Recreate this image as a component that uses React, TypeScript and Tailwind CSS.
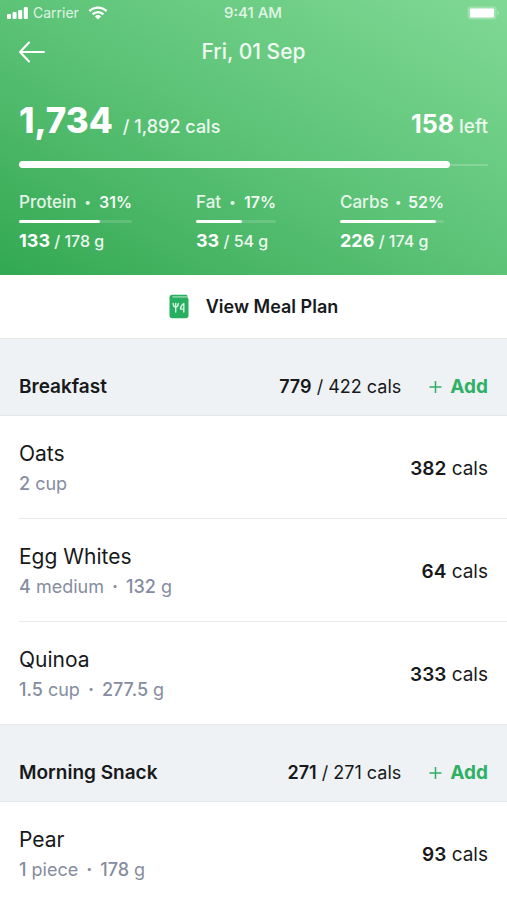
interface Food {
  name: string;
  amount: string;
  unit: string;
  grams?: string;
  cals: number;
}

interface Meal {
  title: string;
  eaten: number;
  goal: number;
  foods: Food[];
}

const macros = [
  { name: "Protein", share: 31, eaten: 133, goal: 178, progress: 72, width: "w-[113px]" },
  { name: "Fat", share: 17, eaten: 33, goal: 54, progress: 58, width: "w-20" },
  { name: "Carbs", share: 52, eaten: 226, goal: 174, progress: 92, width: "w-[104px]" },
];

const meals: Meal[] = [
  {
    title: "Breakfast",
    eaten: 779,
    goal: 422,
    foods: [
      { name: "Oats", amount: "2", unit: "cup", cals: 382 },
      { name: "Egg Whites", amount: "4", unit: "medium", grams: "132", cals: 64 },
      { name: "Quinoa", amount: "1.5", unit: "cup", grams: "277.5", cals: 333 },
    ],
  },
  {
    title: "Morning Snack",
    eaten: 271,
    goal: 271,
    foods: [{ name: "Pear", amount: "1", unit: "piece", grams: "178", cals: 93 }],
  },
];

function StatusBar() {
  return (
    <div className="grid h-[26px] grid-cols-3 items-center pl-[7px] pr-2 text-sm text-white/80">
      <div className="flex items-center gap-[5px]">
        <svg width="21" height="12" viewBox="0 0 21 12" className="fill-white" aria-hidden="true">
          <rect x="0" y="7" width="4" height="5" rx="1" />
          <rect x="5.6" y="5" width="4" height="7" rx="1" />
          <rect x="11.2" y="3" width="4" height="9" rx="1" />
          <rect x="16.8" y="0" width="4" height="12" rx="1" />
        </svg>
        <span>Carrier</span>
        <svg
          width="20"
          height="14"
          viewBox="0 0 20 14"
          fill="none"
          stroke="white"
          strokeWidth="2.4"
          className="ml-1"
          aria-hidden="true"
        >
          <path d="M1.4 5.2a12.2 12.2 0 0 1 17.2 0" />
          <path d="M4.6 8.4a7.6 7.6 0 0 1 10.8 0" />
          <path d="M10 13.4 6.9 10.4a4.4 4.4 0 0 1 6.2 0z" fill="white" stroke="none" />
        </svg>
      </div>
      <span className="text-center text-[15px] font-medium">9:41 AM</span>
      <svg width="33" height="16" viewBox="0 0 33 16" className="justify-self-end" aria-hidden="true">
        <rect x="1.5" y="1.5" width="29" height="13" rx="3" fill="white" fillOpacity="0.25" />
        <rect x="4" y="3.5" width="24" height="9" rx="1" fill="white" />
        <path d="M31.5 5.5c2 1 2 4 0 5z" fill="white" fillOpacity="0.3" />
      </svg>
    </div>
  );
}

function Summary() {
  return (
    <header className="bg-linear-to-tr from-[#32a852] via-[#5cc377] to-[#80d995] pb-[22px] text-white">
      <StatusBar />
      <div className="grid h-[52px] grid-cols-[1fr_auto_1fr] items-center px-[19px]">
        <button type="button" aria-label="Back" className="w-7">
          <svg
            width="26"
            height="22"
            viewBox="0 0 26 22"
            fill="none"
            stroke="currentColor"
            strokeWidth="2"
            strokeLinecap="round"
            strokeLinejoin="round"
          >
            <path d="M25 11H1M10 1.5 1 11l9 9.5" />
          </svg>
        </button>
        <h1 className="text-[21px] font-medium text-white/90">Fri, 01 Sep</h1>
      </div>

      <div className="px-[19px]">
        <div className="mt-5 flex items-baseline justify-between">
          <p className="text-lg font-medium text-white/90">
            <span className="mr-2.5 text-[35px] leading-11 font-extrabold text-white">1,734</span>/ 1,892 cals
          </p>
          <p className="text-[19px] font-medium text-white/85">
            <span className="text-[25px] leading-7 font-bold text-white">158</span> left
          </p>
        </div>
        <div className="mt-[19px] flex h-[7px] items-center rounded-full">
          <div className="h-full w-[92%] rounded-full bg-white" />
          <div className="h-0.5 flex-1 bg-white/20" />
        </div>

        <div className="mt-6 flex gap-16">
          {macros.map((macro) => (
            <div key={macro.name} className={macro.width}>
              <div className="flex items-center justify-between text-[17px] leading-5 font-medium whitespace-nowrap text-white/85">
                <span>{macro.name}</span>
                <span className="text-xs leading-5">•</span>
                <span className="text-base leading-5 font-semibold text-white/95">{macro.share}%</span>
              </div>
              <div className="mt-2 h-[3px] rounded-full bg-white/15">
                <div className="h-full rounded-full bg-white" style={{ width: `${macro.progress}%` }} />
              </div>
              <p className="mt-1.5 text-base leading-6 font-medium whitespace-nowrap text-white/90">
                <span className="text-lg leading-6 font-bold text-white">{macro.eaten}</span> / {macro.goal} g
              </p>
            </div>
          ))}
        </div>
      </div>
    </header>
  );
}

function MealPlanIcon() {
  return (
    <svg width="20" height="25" viewBox="0 0 20 25" fill="none" aria-hidden="true">
      <path
        d="M3.2.8h13.6c1 0 1.6.7 1.6 1.6v1.2c.8.4 1.1 1.2 1.1 2.4v15.5c0 1.700-1 2.700-2.600 2.700H3.300C1.500 24.200.5 23.200.5 21.500V3.500C.5 1.900 1.500.8 3.200.8z"
        fill="#27ae60"
      />
      <path d="M3.4 2.9h15" stroke="#a9dfbd" strokeWidth="1.2" />
      <path
        d="M4.2 9.500c0 2.400.7 3.500 2.500 3.500s2.500-1.100 2.500-3.500M6.700 9.500V18M14.800 18V9.500c-2.200 1.300-3.300 3.200-3.300 5.600h3.300"
        stroke="#d4f5e0"
        strokeWidth="1.400"
        strokeLinecap="round"
        strokeLinejoin="round"
      />
    </svg>
  );
}

function FoodRow({ food }: { food: Food }) {
  return (
    <li className="ml-[19px] flex items-center justify-between border-b border-[#e9ebed] pt-6 pr-[19px] pb-5 last:border-b-0">
      <div>
        <h3 className="text-[21px] leading-7">{food.name}</h3>
        <p className="mt-0.5 flex h-7 items-center gap-2 text-lg text-[#858da0]">
          <span>
            <span className="font-medium">{food.amount}</span> {food.unit}
          </span>
          {food.grams && (
            <>
              <span className="font-bold">·</span>
              <span>
                <span className="font-medium">{food.grams}</span> g
              </span>
            </>
          )}
        </p>
      </div>
      <p className="text-[19px]">
        <span className="font-semibold">{food.cals}</span> cals
      </p>
    </li>
  );
}

function MealSection({ meal }: { meal: Meal }) {
  return (
    <section>
      <div className="flex h-[78px] items-end border-y border-[#e4e8eb] bg-[#eef2f5] px-[19px] pb-3.5">
        <h2 className="flex-1 text-[19px] leading-7 font-semibold">{meal.title}</h2>
        <p className="text-lg leading-7">
          <span className="font-semibold">{meal.eaten}</span> / {meal.goal} cals
        </p>
        <button type="button" className="ml-7 flex items-center gap-2 text-[19px] leading-7 font-bold text-[#2fb064]">
          <svg width="13" height="12" viewBox="0 0 13 12" stroke="currentColor" strokeWidth="1.5" aria-hidden="true">
            <path d="M6.5 0v12M0.5 6h12" />
          </svg>
          Add
        </button>
      </div>
      <ul>
        {meal.foods.map((food) => (
          <FoodRow key={food.name} food={food} />
        ))}
      </ul>
    </section>
  );
}

export default function App() {
  return (
    <div className="min-h-screen bg-white font-['Inter',sans-serif] text-[#18191b]">
      <Summary />
      <main>
        <button type="button" className="flex h-[63px] w-full items-center justify-center gap-[17px] text-lg font-semibold">
          <MealPlanIcon />
          View Meal Plan
        </button>
        {meals.map((meal) => (
          <MealSection key={meal.title} meal={meal} />
        ))}
      </main>
    </div>
  );
}
